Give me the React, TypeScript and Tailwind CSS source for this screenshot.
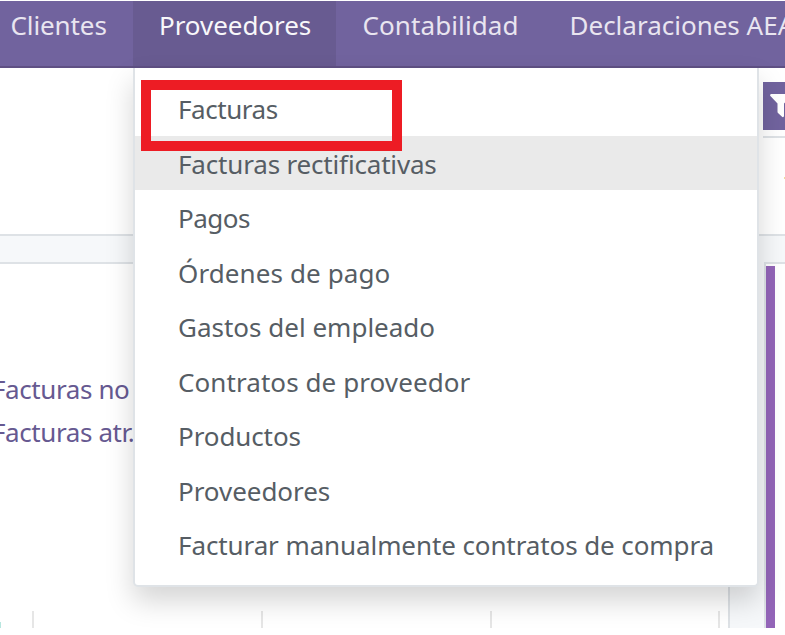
const topItems = [
  { label: 'Clientes', box: 'w-[133px] pl-[10.5px]', text: 'tracking-[-0.1px]', active: false },
  { label: 'Proveedores', box: 'w-[203px] pl-[26px]', text: 'tracking-[-0.05px]', active: true },
  { label: 'Contabilidad', box: 'w-[207px] pl-[26.5px]', text: 'tracking-[0.1px]', active: false },
  { label: 'Declaraciones AEAT', box: 'w-[300px] pl-[26.5px]', text: 'tracking-[0px]', active: false },
];

const menuItems = [
  { label: 'Facturas', text: 'tracking-[-0.45px]', pad: 'pt-[2px]' },
  { label: 'Facturas rectificativas', text: 'tracking-[-0.17px]', pad: 'pt-[4px]', hovered: true },
  { label: 'Pagos', text: 'tracking-[-0.5px]', pad: 'pt-[2px]' },
  { label: 'Órdenes de pago', text: 'tracking-[0.1px]', pad: 'pt-[4px]' },
  { label: 'Gastos del empleado', text: 'tracking-[0px]', pad: 'pt-[2px]' },
  { label: 'Contratos de proveedor', text: 'tracking-[0.08px]', pad: 'pt-[4px]' },
  { label: 'Productos', text: 'tracking-[-0.1px]', pad: 'pt-[2px]' },
  { label: 'Proveedores', text: 'tracking-[-0.05px]', pad: 'pt-[4px]' },
  { label: 'Facturar manualmente contratos de compra', text: 'tracking-[-0.1px]', pad: 'pt-[2px]' },
];

function NavBar() {
  return (
    <nav className="flex h-[67px] shrink-0 border-b-2 border-[#5f5084] bg-[#71639e] text-[#e9e5f0]">
      {topItems.map((item) => (
        <div
          key={item.label}
          className={`${item.box} h-[65px] shrink-0 pt-[7px] leading-[34px] whitespace-nowrap ${item.active ? 'bg-[#685b91] text-[#f8f7fa]' : ''}`}
        >
          <span className={item.text}>{item.label}</span>
        </div>
      ))}
    </nav>
  );
}

function Dropdown() {
  return (
    <div className="absolute top-[68px] left-[133px] h-[519px] w-[626px] rounded-b-[5px] border-2 border-t-0 border-[#dfe3e7] bg-white pt-[13px] text-[#565d64] shadow-[0_14px_28px_rgba(0,0,0,0.17)]">
      {menuItems.map((item) => (
        <div
          key={item.label}
          className={`flex h-[54.5px] items-center pl-[43px] whitespace-nowrap ${item.pad} ${item.hovered ? 'bg-[#eaeaea]' : ''}`}
        >
          <span className={item.text}>{item.label}</span>
        </div>
      ))}
    </div>
  );
}

function Dashboard() {
  return (
    <div className="flex h-[392px] shrink-0 bg-[#f6f8fa] pt-[26px]">
      <section className="flex w-[729.5px] shrink-0 flex-col justify-between border-t-2 border-r-2 border-[#dee2e6] bg-white">
        <div className="pt-[104px] text-[#665991]">
          <div className="-ml-[8px] h-[43px] leading-[43px]">
            <span className="tracking-[-0.4px]">Facturas no</span>
          </div>
          <div className="-ml-[8px] h-[43px] leading-[43px]">
            <span className="tracking-[-0.4px]">Facturas atr.</span>
          </div>
        </div>
        <div className="flex h-[17px] pl-[32px]">
          <div className="w-[229px] border-l-2 border-[#e6e6e6]" />
          <div className="w-[229px] border-l-2 border-[#e6e6e6]" />
          <div className="w-[228px] border-l-2 border-[#e6e6e6]" />
          <div className="w-[2px] bg-[#e6e6e6]" />
        </div>
      </section>
      <section className="ml-[34px] flex flex-1 border-t-2 border-l-2 border-[#dee2e6] bg-white pt-[2px]">
        <div className="w-[9px] bg-[#9365b8]" />
      </section>
    </div>
  );
}

export default function App() {
  return (
    <div className="relative flex h-[635px] w-[785px] flex-col overflow-hidden bg-white pt-px font-['Noto_Sans',sans-serif] text-[26px]">
      <NavBar />
      <header className="flex h-[168px] shrink-0 flex-col items-end border-b-2 border-[#dee2e6] bg-white pt-[14px]">
        <div className="flex h-[48px] w-[22px] items-start overflow-hidden bg-[#71639e] pt-[12px] pl-[7px]">
          <svg className="h-[24px] w-[22px] shrink-0" viewBox="0 0 22 24">
            <path d="M1 0H21Q22.5 .8 21.5 2L14 9.5V22Q13.8 23.6 12.3 23L8 19Q7.5 18.5 7.5 17.8V9.5L.4 2Q-.4 .8 1 0Z" fill="#fff" />
          </svg>
        </div>
        <div className="mt-[6px] h-[2px] w-[22px] bg-[#dee2e6]" />
        <div className="mt-[39px] h-[2px] w-px bg-[#efdca0]" />
      </header>
      <Dashboard />
      <div className="absolute top-[622px] left-0 h-[6px] w-px bg-[#b8e6df]" />
      <Dropdown />
      <div className="absolute top-[80px] left-[141px] h-[71px] w-[261px] border-[10.5px] border-[#ed1c24]" />
      <div className="absolute top-[628px] left-0 h-[7px] w-full bg-white" />
    </div>
  );
}
